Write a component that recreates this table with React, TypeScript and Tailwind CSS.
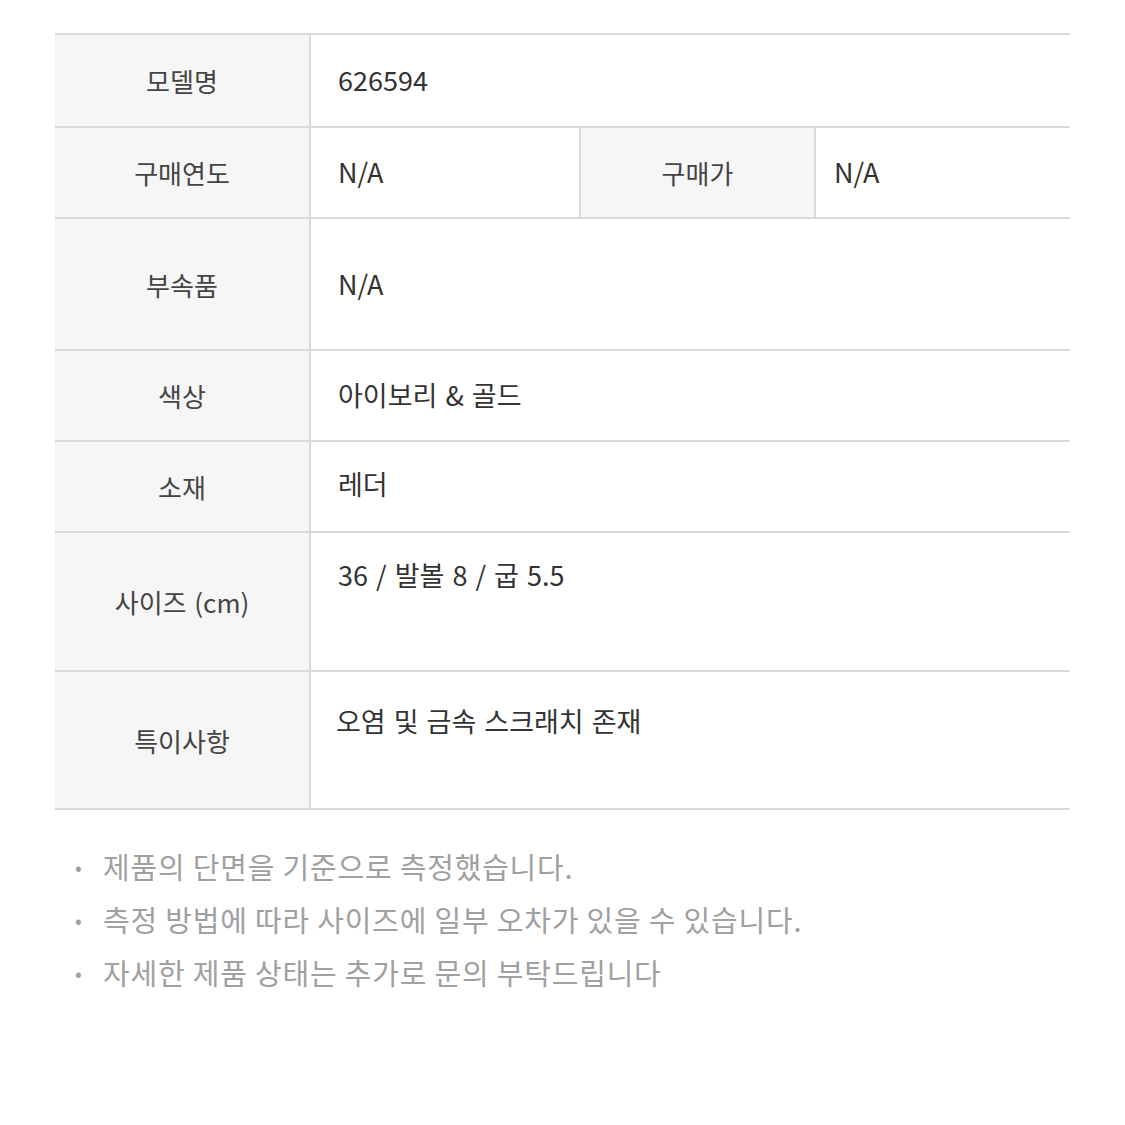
import React from "react";

const font = { fontFamily: '"Noto Sans CJK KR", "Noto Sans", sans-serif' };

function Label({ children, className = "" }: { children: React.ReactNode; className?: string }) {
  return (
    <div className={`flex items-center justify-center bg-[#f6f6f6] text-[#444] text-[26px] ${className}`}>
      {children}
    </div>
  );
}

export default function App() {
  return (
    <div className="w-[1125px] h-[1125px] bg-white pt-[33px] pl-[55px]" style={font}>
      <div className="w-[1015px] border-t-2 border-[#d9d9d9] text-[27px] text-[#333] [word-spacing:2px]">
        <div className="flex h-[93px] border-b-2 border-[#d9d9d9]">
          <Label className="w-[256px] border-r-2 border-[#d9d9d9]">모델명</Label>
          <div className="flex-1 pl-[27px] flex items-center">626594</div>
        </div>
        <div className="flex h-[91px] border-b-2 border-[#d9d9d9]">
          <Label className="w-[256px] border-r-2 border-[#d9d9d9]">구매연도</Label>
          <div className="w-[270px] pl-[27px] flex items-center border-r-2 border-[#d9d9d9]">N/A</div>
          <Label className="w-[235px] border-r-2 border-[#d9d9d9]">구매가</Label>
          <div className="flex-1 pl-[18px] flex items-center">N/A</div>
        </div>
        <div className="flex h-[132px] border-b-2 border-[#d9d9d9]">
          <Label className="w-[256px] border-r-2 border-[#d9d9d9]">부속품</Label>
          <div className="flex-1 pl-[27px] flex items-center">N/A</div>
        </div>
        <div className="flex h-[91px] border-b-2 border-[#d9d9d9]">
          <Label className="w-[256px] border-r-2 border-[#d9d9d9]">색상</Label>
          <div className="flex-1 pl-[27px] flex items-center">아이보리 &amp; 골드</div>
        </div>
        <div className="flex h-[91px] border-b-2 border-[#d9d9d9]">
          <Label className="w-[256px] border-r-2 border-[#d9d9d9]">소재</Label>
          <div className="flex-1 pl-[27px] pt-[22px]">레더</div>
        </div>
        <div className="flex h-[139px] border-b-2 border-[#d9d9d9]">
          <Label className="w-[256px] border-r-2 border-[#d9d9d9]">사이즈 (cm)</Label>
          <div className="flex-1 pl-[27px] pt-[22px]">36 / 발볼 8 / 굽 5.5</div>
        </div>
        <div className="flex h-[138px] border-b-2 border-[#d9d9d9]">
          <Label className="w-[256px] border-r-2 border-[#d9d9d9]">특이사항</Label>
          <div className="flex-1 pl-[25px] pt-[29px]">오염 및 금속 스크래치 존재</div>
        </div>
      </div>
      <ul className="mt-[38px] flex flex-col gap-[15px] text-[29px] tracking-[0.8px] text-[#a0a0a0]">
        <li className="flex items-center h-[38px]"><span className="w-[48px] pl-[20px] text-[20px]">•</span>제품의 단면을 기준으로 측정했습니다.</li>
        <li className="flex items-center h-[38px]"><span className="w-[48px] pl-[20px] text-[20px]">•</span>측정 방법에 따라 사이즈에 일부 오차가 있을 수 있습니다.</li>
        <li className="flex items-center h-[38px]"><span className="w-[48px] pl-[20px] text-[20px]">•</span>자세한 제품 상태는 추가로 문의 부탁드립니다</li>
      </ul>
    </div>
  );
}
